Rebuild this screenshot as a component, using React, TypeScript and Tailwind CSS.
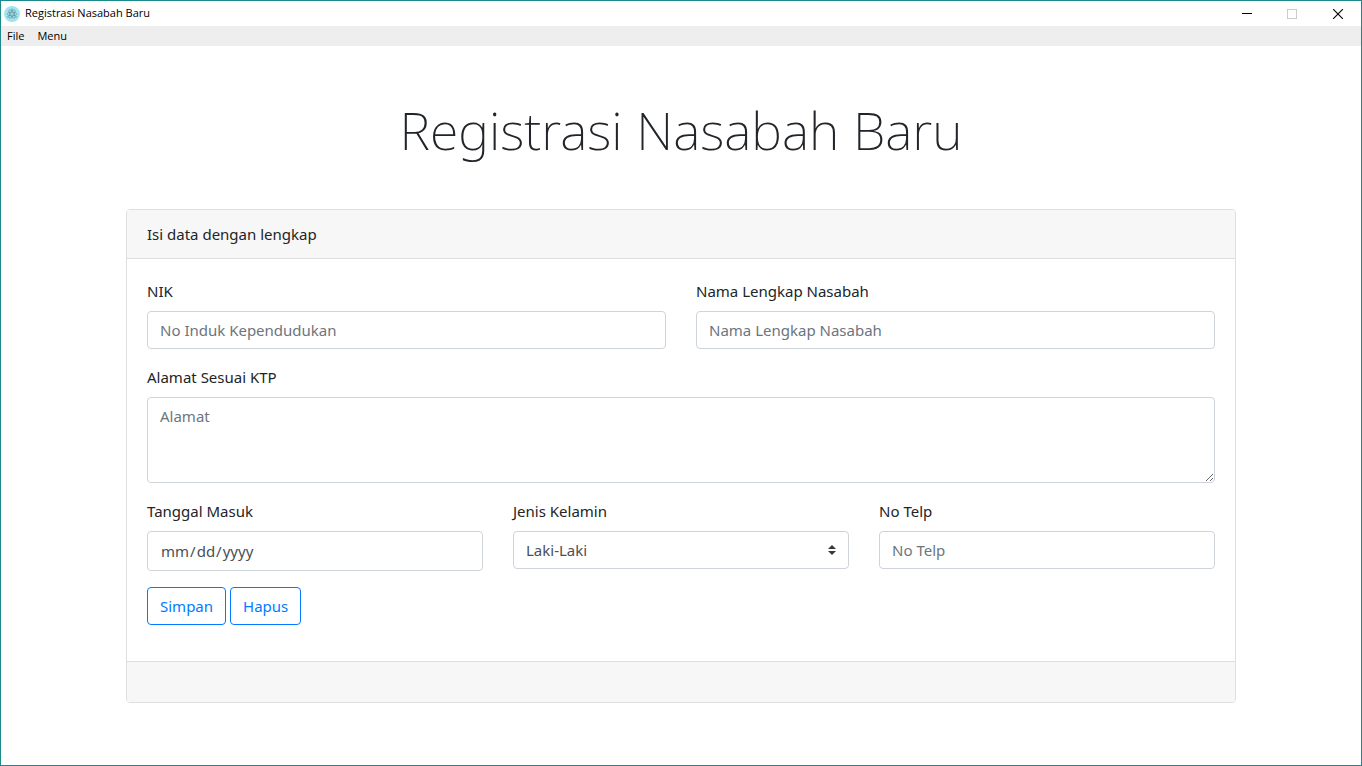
import type { ReactNode } from 'react';

const control =
  'block w-full rounded border border-[#ced4da] bg-white px-3 py-[6px] text-[15px] leading-6 text-[#495057] placeholder:text-[#6c757d] placeholder:opacity-100 focus:outline-none focus:border-[#80bdff]';

const outlineButton =
  'rounded border border-[#007bff] px-3 py-[6px] leading-6 text-[#007bff] hover:bg-[#007bff] hover:text-white';

function Field({ id, label, children }: { id: string; label: string; children: ReactNode }) {
  return (
    <div className="min-w-0">
      <label htmlFor={id} className="mb-2 block">
        {label}
      </label>
      {children}
    </div>
  );
}

function AppIcon() {
  return (
    <svg viewBox="0 0 16 16" className="size-4" aria-hidden="true">
      <circle cx="8" cy="8" r="8" fill="#a2e4ee" />
      <g fill="none" stroke="#5a8c98" strokeWidth="0.6">
        <ellipse cx="8" cy="8" rx="4.8" ry="1.9" />
        <ellipse cx="8" cy="8" rx="4.8" ry="1.9" transform="rotate(60 8 8)" />
        <ellipse cx="8" cy="8" rx="4.8" ry="1.9" transform="rotate(120 8 8)" />
      </g>
      <g fill="#5a8c98">
        <circle cx="8" cy="8" r="0.6" />
        <circle cx="8" cy="3.2" r="0.6" />
        <circle cx="3.9" cy="10.8" r="0.6" />
        <circle cx="12.1" cy="10.8" r="0.6" />
      </g>
    </svg>
  );
}

function TitleBar() {
  return (
    <header className="flex h-[25px] items-center justify-between bg-white text-xs text-black">
      <div className="flex items-center gap-[5px] pl-[3px]">
        <AppIcon />
        <span className="font-['Open_Sans','Noto_Sans',sans-serif] text-[11px]">Registrasi Nasabah Baru</span>
      </div>
      <div className="flex self-stretch">
        <button type="button" aria-label="Minimize" className="flex w-[45px] items-center justify-center">
          <svg viewBox="0 0 10 10" className="size-[10px]" shapeRendering="crispEdges">
            <path d="M0 4.5H10" stroke="#000" />
          </svg>
        </button>
        <button type="button" aria-label="Maximize" disabled className="flex w-[46px] items-center justify-center">
          <svg viewBox="0 0 10 10" className="size-[10px]" shapeRendering="crispEdges">
            <path d="M0.5 0.5H9.5V9.5H0.5Z" fill="none" stroke="#ccc" />
          </svg>
        </button>
        <button type="button" aria-label="Close" className="flex w-[46px] items-center justify-center">
          <svg viewBox="0 0 10 10" className="size-[10px]">
            <path d="M0 0L10 10M10 0L0 10" stroke="#000" strokeWidth="1.1" />
          </svg>
        </button>
      </div>
    </header>
  );
}

export default function App() {
  return (
    <div className="flex min-h-screen flex-col border border-[#1b8a8c] bg-white font-['Noto_Sans','Open_Sans',sans-serif] text-[15px] leading-6 text-[#212529]">
      <TitleBar />
      <nav className="flex h-5 items-center gap-[13px] bg-[#eee] px-[6px] pb-px font-['Open_Sans','Noto_Sans',sans-serif] text-[11px] text-black">
        <button type="button">File</button>
        <button type="button">Menu</button>
      </nav>

      <main className="mx-auto w-full max-w-[1140px] px-[15px] pb-12">
        <h1 className="pt-[50px] pb-[46px] text-center text-[52px] leading-[67px] font-extralight">
          Registrasi Nasabah Baru
        </h1>

        <section className="overflow-hidden rounded border border-[#dfdfdf]">
          <div className="border-b border-[#dfdfdf] bg-[#f7f7f7] px-5 py-3">Isi data dengan lengkap</div>

          <form className="flex flex-col gap-4 px-5 pt-5 pb-9" onSubmit={(e) => e.preventDefault()}>
            <div className="grid grid-cols-2 gap-[30px]">
              <Field id="nik" label="NIK">
                <input id="nik" type="text" placeholder="No Induk Kependudukan" className={control} />
              </Field>
              <Field id="nama" label="Nama Lengkap Nasabah">
                <input id="nama" type="text" placeholder="Nama Lengkap Nasabah" className={control} />
              </Field>
            </div>

            <Field id="alamat" label="Alamat Sesuai KTP">
              <textarea id="alamat" rows={3} placeholder="Alamat" className={`${control} resize-y`} />
            </Field>

            <div className="grid grid-cols-3 gap-[30px]">
              <Field id="tanggal" label="Tanggal Masuk">
                <input
                  id="tanggal"
                  type="date"
                  className={`${control} h-10 [&::-webkit-calendar-picker-indicator]:hidden`}
                />
              </Field>
              <Field id="kelamin" label="Jenis Kelamin">
                <div className="relative">
                  <select id="kelamin" className={`${control} appearance-none pr-7`}>
                    <option>Laki-Laki</option>
                    <option>Perempuan</option>
                  </select>
                  <svg
                    viewBox="0 0 4 5"
                    className="pointer-events-none absolute top-[14px] right-[13px] h-[10px] w-2"
                    aria-hidden="true"
                  >
                    <path fill="#343a40" d="M2 0L0 2h4zm0 5L0 3h4z" />
                  </svg>
                </div>
              </Field>
              <Field id="telp" label="No Telp">
                <input id="telp" type="text" placeholder="No Telp" className={control} />
              </Field>
            </div>

            <div className="flex gap-1">
              <button type="submit" className={outlineButton}>
                Simpan
              </button>
              <button type="reset" className={outlineButton}>
                Hapus
              </button>
            </div>
          </form>

          <div className="h-[41px] border-t border-[#dfdfdf] bg-[#f7f7f7]" />
        </section>
      </main>
    </div>
  );
}
